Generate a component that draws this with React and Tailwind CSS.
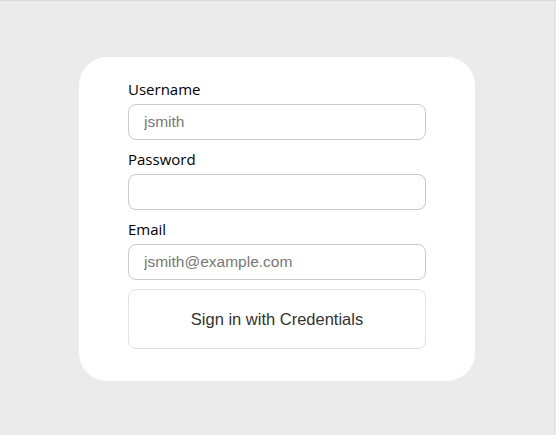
export default function App() {
  return (
    <div className="w-[556px] h-[435px] bg-[#ebebeb] border-t border-[#dadada] flex justify-start">
      <div className="ml-[79px] mt-[56px] w-[396px] h-[324px] bg-white rounded-[28px] px-[49px] pt-[22px] pb-[32px] flex flex-col">
        <Field label="Username" placeholder="jsmith" />
        <Field label="Password" placeholder="" type="password" className="mt-[9px]" />
        <Field label="Email" placeholder="jsmith@example.com" className="mt-[9px]" />
        <button className="mt-[9px] h-[60px] shrink-0 w-full rounded-[8px] border border-[#e2e2e2] bg-white text-[16.5px] text-[#333] font-['Liberation_Sans',Arial,sans-serif]">
          Sign in with Credentials
        </button>
      </div>
      <div className="ml-auto mr-[1px] w-px h-full bg-[#e0e0e0]" />
    </div>
  );
}

function Field({ label, placeholder, type = 'text', className = '' }) {
  return (
    <div className={`flex flex-col shrink-0 ${className}`}>
      <label className="h-[20px] leading-[20px] text-[15px] text-black font-['Open_Sans',sans-serif] mb-[5px]">
        {label}
      </label>
      <input
        type={type}
        placeholder={placeholder}
        className="h-[36px] w-full rounded-[8px] border border-[#c9c9c9] px-[15px] text-[15.5px] text-[#333] placeholder:text-[#777] font-['Liberation_Sans',Arial,sans-serif] outline-none"
      />
    </div>
  );
}
